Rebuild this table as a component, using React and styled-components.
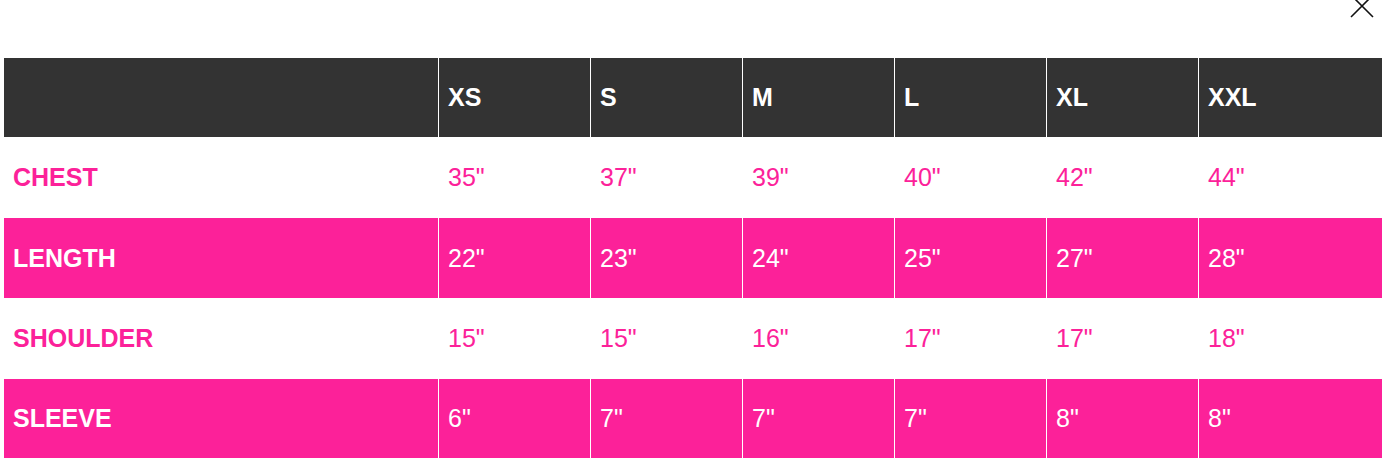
import React from 'react'
import styled, { createGlobalStyle } from 'styled-components'

const GlobalStyle = createGlobalStyle`
  body {
    margin: 0;
    background: #fff;
    font-family: "Liberation Sans", Arial, sans-serif;
  }
`

const PINK = '#fc2199'

const Page = styled.div`
  position: relative;
  width: 1390px;
  height: 472px;
  padding: 58px 0 0 4px;
  box-sizing: border-box;
  overflow: hidden;
`

const Close = styled.button`
  position: absolute;
  top: -6px;
  right: 16px;
  width: 24px;
  height: 24px;
  padding: 0;
  border: none;
  background: none;
  cursor: pointer;
`

const Table = styled.div`
  display: grid;
  grid-template-columns: 434px repeat(5, 152px) 184px;
  width: 1378px;
`

const Row = styled.div`
  display: contents;
`

const Cell = styled.div`
  height: ${p => p.$h || 80}px;
  display: flex;
  align-items: center;
  padding-left: ${p => (p.$first ? 9 : 9)}px;
  box-sizing: border-box;
  border-left: ${p => (p.$first ? 'none' : '1px solid #fff')};
  background: ${p => (p.$variant === 'head' ? '#333333' : p.$variant === 'pink' ? PINK : '#fff')};
  color: ${p => (p.$variant === 'white' ? PINK : '#fff')};
  font-size: 25px;
  font-weight: ${p => (p.$bold ? 700 : 400)};
  white-space: nowrap;
`

const sizes = ['XS', 'S', 'M', 'L', 'XL', 'XXL']

const rows = [
  { label: 'CHEST', values: ['35"', '37"', '39"', '40"', '42"', '44"'], variant: 'white', h: 81 },
  { label: 'LENGTH', values: ['22"', '23"', '24"', '25"', '27"', '28"'], variant: 'pink', h: 80 },
  { label: 'SHOULDER', values: ['15"', '15"', '16"', '17"', '17"', '18"'], variant: 'white', h: 81 },
  { label: 'SLEEVE', values: ['6"', '7"', '7"', '7"', '8"', '8"'], variant: 'pink', h: 79 },
]

export default function App() {
  return (
    <Page>
      <GlobalStyle />
      <Close aria-label="Close">
        <svg width="24" height="24" viewBox="0 0 24 24">
          <path d="M1 1 L23 23 M23 1 L1 23" stroke="#111" strokeWidth="1.6" fill="none" />
        </svg>
      </Close>
      <Table>
        <Row>
          <Cell $first $variant="head" $bold $h={79} />
          {sizes.map(s => (
            <Cell key={s} $variant="head" $bold $h={79}>{s}</Cell>
          ))}
        </Row>
        {rows.map(r => (
          <Row key={r.label}>
            <Cell $first $variant={r.variant} $bold $h={r.h}>{r.label}</Cell>
            {r.values.map((v, i) => (
              <Cell key={i} $variant={r.variant} $h={r.h}>{v}</Cell>
            ))}
          </Row>
        ))}
      </Table>
    </Page>
  )
}
